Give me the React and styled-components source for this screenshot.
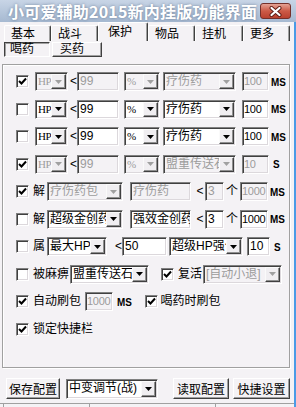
import React from 'react';
import styled, { createGlobalStyle } from 'styled-components';

const FONT = `"Liberation Sans", "Noto Sans CJK SC", sans-serif`;
const BG = '#f4f2f5';

const GlobalStyle = createGlobalStyle`
  html, body {
    margin: 0;
    padding: 0;
    background: ${BG};
  }
  body {
    font-family: ${FONT};
    font-size: 12px;
  }
`;

const Window = styled.div`
  width: 296px;
  height: 407px;
  display: flex;
  flex-direction: column;
  background: ${BG};
  overflow: hidden;
`;

const TitleBar = styled.div`
  height: 22px;
  flex: none;
  display: flex;
  align-items: center;
  justify-content: space-between;
  padding: 0 5px 0 8px;
  background: linear-gradient(#c8d5e6, #a6b9d1);
`;

const Title = styled.div`
  color: #fff;
  font-family: "Noto Sans CJK SC", sans-serif;
  font-weight: bold;
  font-size: 16px;
  letter-spacing: 0.2px;
  text-shadow: 0 0 3px rgba(50, 70, 100, 0.55);
  white-space: nowrap;
`;

const CloseButton = styled.div`
  width: 31px;
  height: 16px;
  box-sizing: border-box;
  border: 1px solid #74302a;
  border-radius: 3px;
  background: linear-gradient(#e4a294, #cc5a46 50%, #b9412f);
  display: flex;
  align-items: center;
  justify-content: center;
`;

const Content = styled.div`
  flex: 1;
  display: flex;
  flex-direction: column;
  border-right: 2px solid #4b9be6;
`;

const TabStrip = styled.div`
  height: 19px;
  flex: none;
  display: flex;
  align-items: flex-end;
  padding-left: 4px;
`;

const Tab = styled.div`
  box-sizing: border-box;
  width: ${p => p.$w}px;
  height: ${p => (p.$on ? 19 : 16)}px;
  padding: ${p => (p.$on ? '2px 0 0 9px' : '1px 0 0 6px')};
  border-top: 1px solid #fff;
  border-left: 1px solid #fff;
  border-right: 1px solid #404040;
  box-shadow: inset -1px 0 0 #a0a0a0;
  border-radius: 2px 2px 0 0;
  font-size: 12px;
  line-height: 14px;
  white-space: nowrap;
`;

const SubTabs = styled.div`
  height: 16px;
  flex: none;
  display: flex;
  gap: 2px;
  padding: 1px 0 0 4px;
  box-sizing: border-box;
`;

const SubTab = styled.div`
  box-sizing: border-box;
  width: ${p => p.$w}px;
  height: 15px;
  padding-left: ${p => (p.$on ? 5 : 7)}px;
  border: 1px solid;
  border-color: ${p => (p.$on ? '#404040 #fff #fff #404040' : '#fff #404040 #404040 #fff')};
  box-shadow: ${p => (p.$on ? 'inset 1px 1px 0 #a0a0a0' : 'inset -1px -1px 0 #a0a0a0')};
  font-size: 12px;
  line-height: 13px;
`;

const Frame = styled.div`
  margin: 7px 0 0 2px;
  width: 288px;
  height: 304px;
  flex: none;
  box-sizing: border-box;
  border: 1px solid #a0a0a0;
  box-shadow: inset 1px 1px 0 #fff, 1px 1px 0 #fff;
  padding: 7px 0 0 13px;
  display: flex;
  flex-direction: column;
  gap: 8.5px;
`;

const Row = styled.div`
  height: 19px;
  flex: none;
  display: flex;
  align-items: center;
`;

const CheckBox = styled.div`
  box-sizing: border-box;
  width: 13px;
  height: 13px;
  flex: none;
  margin-left: ${p => p.$ml || 0}px;
  border: 1px solid;
  border-color: #808080 #fff #fff #808080;
  box-shadow: inset 1px 1px 0 #404040, inset -1px -1px 0 #dcd8dc;
  background: #fff;
  display: flex;
  align-items: center;
  justify-content: center;
`;

const Label = styled.span`
  margin-left: ${p => p.$ml || 0}px;
  width: ${p => (p.$w ? `${p.$w}px` : 'auto')};
  flex: none;
  font-size: 12px;
  line-height: 19px;
  white-space: nowrap;
  text-align: ${p => (p.$w ? 'center' : 'left')};
`;

const Unit = styled.span`
  margin-left: ${p => p.$ml || 0}px;
  flex: none;
  font-family: "Liberation Sans", sans-serif;
  font-size: 11px;
  font-weight: bold;
  transform: scaleX(0.9);
  transform-origin: left center;
`;

const Field = styled.div`
  box-sizing: border-box;
  width: ${p => p.$w}px;
  height: 19px;
  flex: none;
  margin-left: ${p => p.$ml || 0}px;
  border: 1px solid;
  border-color: #808080 #fff #fff #808080;
  box-shadow: inset 1px 1px 0 #404040, inset -1px -1px 0 #dcd8dc;
  background: ${p => (p.$off ? BG : '#fff')};
  color: ${p => (p.$off ? '#9c9c9c' : '#000')};
  padding-left: ${p => (p.$tight ? 1 : 2)}px;
  font-size: ${p => (p.$tight ? 11 : 12)}px;
  letter-spacing: ${p => (p.$tight ? -0.3 : 0)}px;
  line-height: 17px;
  white-space: nowrap;
  overflow: hidden;
`;

const ComboBox = styled(Field)`
  height: ${p => p.$h || 19}px;
  display: flex;
  align-items: center;
  padding: 1px;
`;

const ComboText = styled.span`
  flex: 1;
  min-width: 0;
  overflow: hidden;
  white-space: nowrap;
  font-family: ${p => (p.$serif ? `"Liberation Serif", "Noto Sans CJK SC", serif` : FONT)};
  font-size: ${p => (p.$serif ? 11 : 12)}px;
  letter-spacing: ${p => (p.$serif ? -0.5 : 0)}px;
  padding-left: 1px;
`;

const DropButton = styled.div`
  box-sizing: border-box;
  width: 15px;
  height: 100%;
  flex: none;
  background: #f0eef1;
  border: 1px solid;
  border-color: #fafafa #404040 #404040 #fafafa;
  box-shadow: inset -1px -1px 0 #909090;
  display: flex;
  align-items: center;
  justify-content: center;
`;

const ButtonBar = styled.div`
  height: 21px;
  flex: none;
  margin-top: 10px;
  padding-left: 6px;
  display: flex;
  align-items: center;
`;

const Button = styled.div`
  box-sizing: border-box;
  width: ${p => p.$w}px;
  height: 21px;
  flex: none;
  margin-left: ${p => p.$ml || 0}px;
  border: 1px solid;
  border-color: #fff #404040 #404040 #fff;
  box-shadow: inset -1px -1px 0 #a0a0a0;
  display: flex;
  align-items: center;
  justify-content: center;
  font-size: 12px;
`;

const StatusBar = styled.div`
  margin-top: 4px;
  flex: 1;
  display: flex;
  padding-left: 3px;
  border-top: 1px solid #a0a0a0;
`;

const StatusPanel = styled.div`
  width: ${p => (p.$w ? `${p.$w}px` : 'auto')};
  flex: ${p => (p.$w ? 'none' : '1')};
  border-left: 1px solid #a0a0a0;
`;

const Arrow = ({ off }) => (
  <svg width="7" height="4" viewBox="0 0 7 4">
    <polygon points="0,0 7,0 3.5,4" fill={off ? '#a0a0a0' : '#000'} />
  </svg>
);

const Check = ({ checked, ml }) => (
  <CheckBox $ml={ml}>
    {checked && (
      <svg width="9" height="9" viewBox="0 0 9 9">
        <polyline points="1,4 3.5,6.5 8,1.5" fill="none" stroke="#000" strokeWidth="2" />
      </svg>
    )}
  </CheckBox>
);

const Combo = ({ w, ml, h, off, value, serif }) => (
  <ComboBox $w={w} $ml={ml} $h={h} $off={off}>
    <ComboText $serif={serif}>{value}</ComboText>
    <DropButton>
      <Arrow off={off} />
    </DropButton>
  </ComboBox>
);

const HpRow = ({ checked, off, item, time, unit }) => (
  <Row>
    <Check checked={checked} />
    <Combo ml={6} w={33} off={off} value="HP" serif />
    <Label $ml={2} $w={7}>&lt;</Label>
    <Field $w={42} $off={off}>99</Field>
    <Combo ml={5} w={36} off={off} value="%" serif />
    <Combo ml={3} w={73} off={off} value={item} />
    <Field $ml={6} $w={27} $off={off} $tight>{time}</Field>
    <Unit $ml={unit === 'S' ? 4 : 2}>{unit}</Unit>
  </Row>
);

const UnpackRow = ({ checked, off, bag, item }) => (
  <Row>
    <Check checked={checked} />
    <Label $ml={4}>解</Label>
    <Combo ml={2} w={76} off={off} value={bag} />
    <Field $ml={7} $w={61} $off={off}>{item}</Field>
    <Label $ml={5} $w={8}>&lt;</Label>
    <Field $ml={1} $w={19} $off={off}>3</Field>
    <Label $ml={2}>个</Label>
    <Field $ml={2} $w={28} $off={off} $tight>1000</Field>
    <Unit $ml={2}>MS</Unit>
  </Row>
);

const App = () => {
  return (
    <Window>
      <GlobalStyle />
      <TitleBar>
        <Title>小可爱辅助2015新内挂版功能界面</Title>
        <CloseButton>
          <svg width="13" height="11" viewBox="0 0 13 11">
            <path d="M2.5 2 L10.5 9 M10.5 2 L2.5 9" stroke="#5e1c14" strokeWidth="4" strokeLinecap="round" />
            <path d="M2.5 2 L10.5 9 M10.5 2 L2.5 9" stroke="#fff" strokeWidth="2.2" strokeLinecap="round" />
          </svg>
        </CloseButton>
      </TitleBar>
      <Content>
        <TabStrip>
          <Tab $w={47}>基本</Tab>
          <Tab $w={47}>战斗</Tab>
          <Tab $w={50} $on>保护</Tab>
          <Tab $w={47}>物品</Tab>
          <Tab $w={48}>挂机</Tab>
          <Tab $w={47}>更多</Tab>
        </TabStrip>
        <SubTabs>
          <SubTab $w={46} $on>喝药</SubTab>
          <SubTab $w={50}>买药</SubTab>
        </SubTabs>
        <Frame>
          <HpRow checked off item="疗伤药" time="100" unit="MS" />
          <HpRow item="疗伤药" time="100" unit="MS" />
          <HpRow item="疗伤药" time="100" unit="MS" />
          <HpRow checked off item="盟重传送石" time="10" unit="S" />
          <UnpackRow checked off bag="疗伤药包" item="疗伤药" />
          <UnpackRow bag="超级金创药" item="强效金创药" />
          <Row>
            <Check />
            <Label $ml={4}>属</Label>
            <Combo ml={2} w={60} value="最大HP" />
            <Label $ml={8} $w={7}>&lt;</Label>
            <Field $w={45}>50</Field>
            <Combo ml={2} w={74} value="超级HP强化" />
            <Field $ml={4} $w={23}>10</Field>
            <Unit $ml={4}>S</Unit>
          </Row>
          <Row>
            <Check />
            <Label $ml={4}>被麻痹</Label>
            <Combo ml={1} w={79} value="盟重传送石" />
            <Check checked ml={12} />
            <Label $ml={4}>复活</Label>
            <Combo ml={1} w={79} off value="[自动小退]" />
          </Row>
          <Row>
            <Check checked />
            <Label $ml={4}>自动刷包</Label>
            <Field $ml={4} $w={28} $off $tight>1000</Field>
            <Unit $ml={4}>MS</Unit>
            <Check checked ml={11} />
            <Label $ml={3}>喝药时刷包</Label>
          </Row>
          <Row>
            <Check checked />
            <Label $ml={4}>锁定快捷栏</Label>
          </Row>
        </Frame>
        <ButtonBar>
          <Button $w={54}>保存配置</Button>
          <Combo ml={6} w={92} h={20} value="中变调节(战)" />
          <Button $ml={15} $w={56}>读取配置</Button>
          <Button $ml={4} $w={57}>快捷设置</Button>
        </ButtonBar>
        <StatusBar>
          <StatusPanel $w={85} />
          <StatusPanel $w={125} />
          <StatusPanel />
        </StatusBar>
      </Content>
    </Window>
  );
};

export default App;
